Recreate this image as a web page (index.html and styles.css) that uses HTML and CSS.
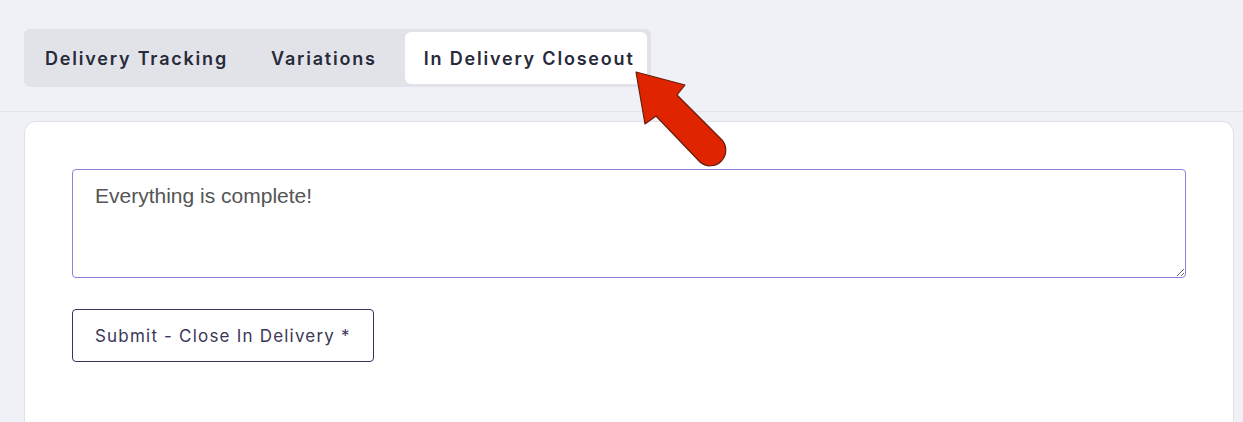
FILE: index.html
```html
<!DOCTYPE html>
<html lang="en">
<head>
<meta charset="utf-8">
<title>In Delivery Closeout</title>
<link rel="stylesheet" href="styles.css">
</head>
<body>
  <header class="tabs-area">
    <nav class="tabs">
      <button class="tab">Delivery Tracking</button>
      <button class="tab">Variations</button>
      <button class="tab tab-active">In Delivery Closeout</button>
    </nav>
    <!-- callout arrow pointing at the active tab -->
    <svg class="pointer" width="120" height="120" viewBox="0 0 120 120" aria-hidden="true">
      <path d="M16 12 L65 25 L57 35 L102 80 A15.6 15.6 0 0 1 80 102 L36 56 L25 64 Z"
            fill="#e02400" stroke="#6a1c0c" stroke-width="1.2" stroke-linejoin="round"/>
    </svg>
  </header>
  <main class="card">
    <textarea class="notes">Everything is complete!</textarea>
    <button class="submit">Submit - Close In Delivery *</button>
  </main>
</body>
</html>
```
FILE: styles.css
```css
html, body {
  margin: 0;
  height: 100%;
}
body {
  background: #f0f1f6;
  font-family: "Inter", "Open Sans", sans-serif;
  overflow: hidden;
}
.tabs-area {
  position: relative;
  padding: 29px 24px 24px;
  border-bottom: 1px solid #e4e5ea;
}
.tabs {
  display: inline-flex;
  align-items: center;
  background: #e2e3e8;
  border-radius: 6px;
  padding: 3px 4px 3px 0;
  height: 52px;
}
.tab {
  border: 0;
  background: transparent;
  font-family: inherit;
  font-size: 18px;
  font-weight: 600;
  letter-spacing: 1.8px;
  color: #272a3b;
  padding: 0 22px 0 21px;
  height: 52px;
  border-radius: 6px;
  cursor: pointer;
}
.tab-active {
  margin-left: 6px;
  padding: 0 12px 0 19px;
  background: #fff;
}
.pointer {
  position: absolute;
  left: 620px;
  top: 60px;
  overflow: visible;
}
.card {
  box-sizing: border-box;
  height: 301px;
  margin: 9px 9px 0 24px;
  background: #fff;
  border: 1px solid #e0e1e6;
  border-bottom: 0;
  border-radius: 12px 12px 0 0;
  padding: 47px 47px 0;
  display: flex;
  flex-direction: column;
  align-items: flex-start;
  gap: 31px;
}
.notes {
  box-sizing: border-box;
  width: 100%;
  height: 109px;
  border: 1px solid #8d84d8;
  border-radius: 4px;
  padding: 14px 22px;
  font-family: "Liberation Sans", Arial, sans-serif;
  font-size: 21px;
  color: #555555;
  resize: vertical;
  outline: none;
}
.submit {
  height: 53px;
  padding: 0 22px;
  background: #fff;
  border: 1px solid #3a3458;
  border-radius: 4px;
  font-family: inherit;
  font-size: 17px;
  letter-spacing: 1.2px;
  color: #3a3758;
  cursor: pointer;
}
```
